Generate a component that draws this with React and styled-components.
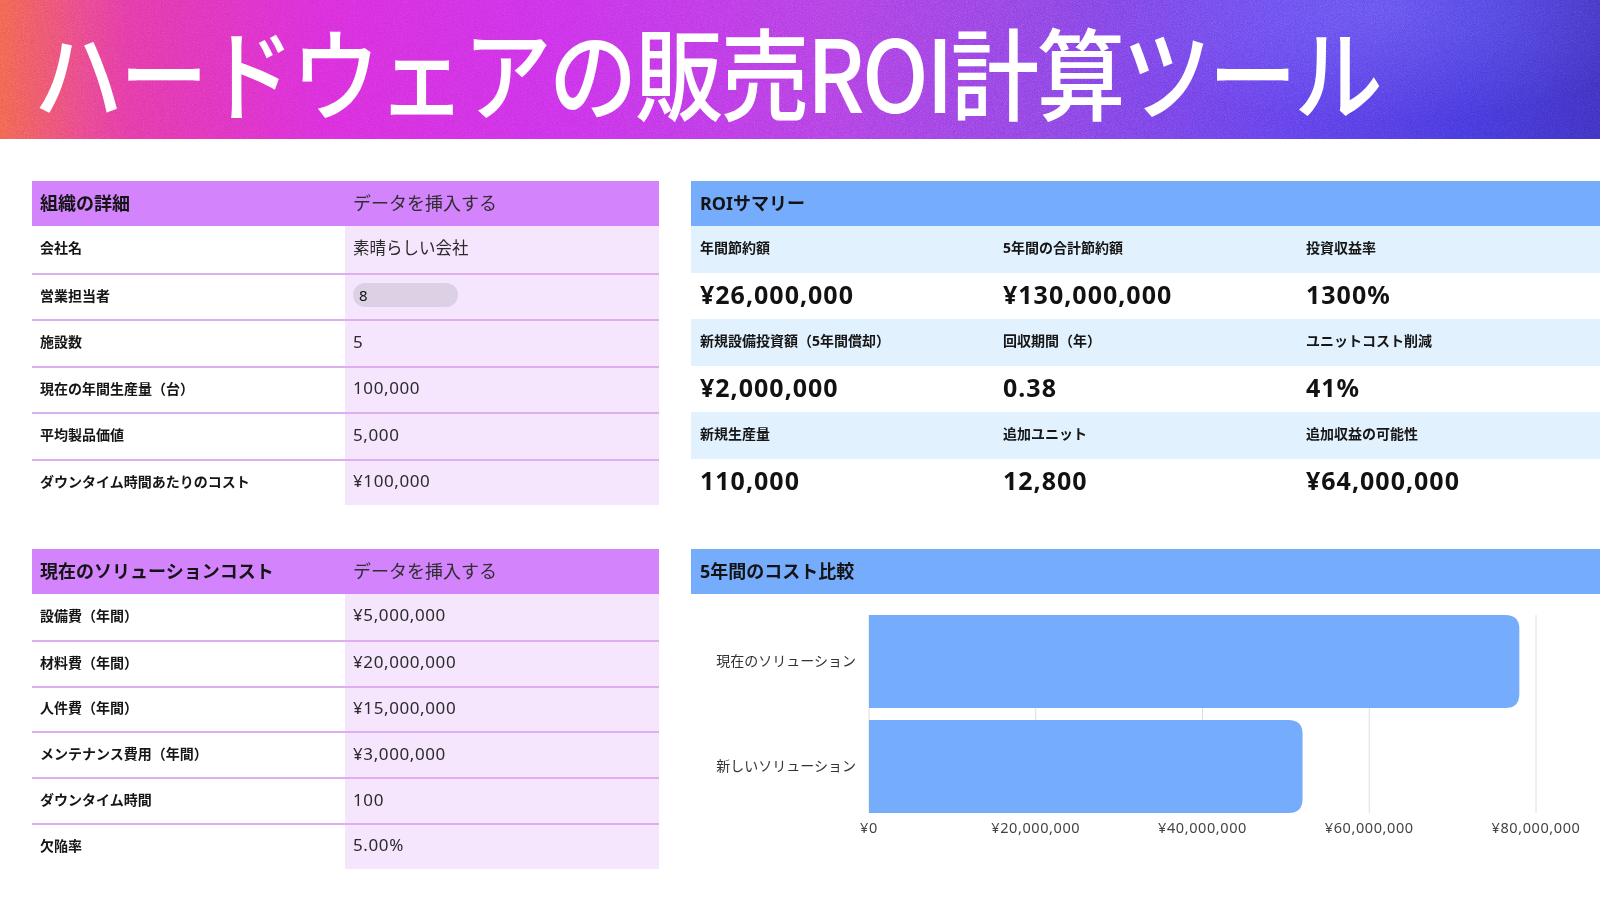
import React from 'react';
import styled, { createGlobalStyle } from 'styled-components';

const GlobalStyle = createGlobalStyle`
    body {
        margin: 0;
        background: #ffffff;
        font-family: "Noto Sans", "Noto Sans CJK JP", sans-serif;
        color: #1d1d1f;
    }
`;

const Page = styled.div`
    width: 1600px;
    height: 900px;
    overflow: hidden;
`;

const Banner = styled.header`
    position: relative;
    height: 139px;
    display: flex;
    align-items: center;
    padding-left: 34px;
    background:
        radial-gradient(ellipse 420px 160px at 1380px 10px, rgba(120, 110, 255, 0.4), transparent 70%),
        linear-gradient(90deg, #ef5b47 0%, #e0359a 8%, #d42ad6 20%, #c42ee6 35%, #a83ce0 52%, #8040e0 65%, #5a3ce8 80%, #4034d8 92%, #3a2eb8 100%);
`;

const Noise = styled.svg`
    position: absolute;
    inset: 0;
    z-index: 0;
    width: 100%;
    height: 100%;
    mix-blend-mode: overlay;
    opacity: 0.8;
    pointer-events: none;
`;

const Title = styled.h1`
    position: relative;
    z-index: 1;
    margin: 0;
    font-family: "Noto Sans CJK JP", sans-serif;
    font-size: 88.5px;
    font-weight: 500;
    line-height: 1.2;
    letter-spacing: -2.65px;
    color: #ffffff;
    white-space: nowrap;
    transform: scaleY(1.13);
    transform-origin: left center;
`;

const Main = styled.main`
    display: grid;
    grid-template-columns: 627px 909px;
    column-gap: 32px;
    row-gap: 44px;
    padding: 42px 0 0 32px;
`;

const Table = styled.section`
    display: grid;
    grid-template-columns: 313px 314px;
`;

const HeadCell = styled.div`
    box-sizing: border-box;
    height: 45px;
    display: flex;
    align-items: center;
    padding: 0 0 4px 8px;
    background: #d383fc;
    font-size: 18px;
    font-weight: ${({ $bold }) => ($bold ? 700 : 400)};
    color: ${({ $bold }) => ($bold ? '#141414' : '#2e2e2e')};
`;

const Cell = styled.div`
    box-sizing: border-box;
    height: ${({ $h }) => $h || '46.5px'};
    display: flex;
    align-items: center;
    padding: 0 0 4px 8px;
    border-top: ${({ $first }) => ($first ? 'none' : '2px solid #dcb0ee')};
`;

const LabelCell = styled(Cell)`
    font-size: 14px;
    font-weight: 700;
    color: #161616;
`;

const ValueCell = styled(Cell)`
    background: #f5e6fe;
    font-size: ${({ $num }) => ($num ? '17px' : '16.5px')};
    letter-spacing: ${({ $num }) => ($num ? '0.6px' : '0')};
    color: #2b2b2b;
`;

const Pill = styled.span`
    display: inline-flex;
    align-items: center;
    box-sizing: border-box;
    width: 105px;
    height: 24px;
    padding-left: 6px;
    border-radius: 12px;
    background: #dcd0e4;
    font-size: 15px;
    color: #111;
`;

const Panel = styled.section`
    display: flex;
    flex-direction: column;
`;

const PanelHead = styled.div`
    box-sizing: border-box;
    height: 45px;
    display: flex;
    align-items: center;
    padding: 0 0 4px 9px;
    background: #76acfc;
    font-size: 18px;
    font-weight: 700;
    color: #141414;
`;

const SummaryGrid = styled.div`
    display: grid;
    grid-template-columns: repeat(3, 303px);
`;

const SumLabel = styled.div`
    box-sizing: border-box;
    height: 46.5px;
    display: flex;
    align-items: center;
    padding: 0 0 4px 9px;
    background: #e1f1fe;
    font-size: 14px;
    font-weight: 700;
    color: #161616;
`;

const SumValue = styled.div`
    box-sizing: border-box;
    height: 46.5px;
    display: flex;
    align-items: center;
    padding: 0 0 4px 9px;
    font-size: 25px;
    font-weight: 700;
    letter-spacing: 1px;
    color: #121212;
`;

const ChartBox = styled.div`
    height: 256px;
`;

const orgRows = [
    ['会社名', '素晴らしい会社'],
    ['営業担当者', '8', true],
    ['施設数', '5'],
    ['現在の年間生産量（台）', '100,000'],
    ['平均製品価値', '5,000'],
    ['ダウンタイム時間あたりのコスト', '¥100,000'],
];

const costRows = [
    ['設備費（年間）', '¥5,000,000'],
    ['材料費（年間）', '¥20,000,000'],
    ['人件費（年間）', '¥15,000,000'],
    ['メンテナンス費用（年間）', '¥3,000,000'],
    ['ダウンタイム時間', '100'],
    ['欠陥率', '5.00%'],
];

const summary = [
    [
        ['年間節約額', '¥26,000,000'],
        ['5年間の合計節約額', '¥130,000,000'],
        ['投資収益率', '1300%'],
    ],
    [
        ['新規設備投資額（5年間償却）', '¥2,000,000'],
        ['回収期間（年）', '0.38'],
        ['ユニットコスト削減', '41%'],
    ],
    [
        ['新規生産量', '110,000'],
        ['追加ユニット', '12,800'],
        ['追加収益の可能性', '¥64,000,000'],
    ],
];

const bars = [
    { label: '現在のソリューション', value: 78000000 },
    { label: '新しいソリューション', value: 52000000 },
];

const isNumeric = (v) => /^[¥0-9.,%]+$/.test(v);

function DataTable({ title, rows, rowHeight }) {
    return (
        <Table>
            <HeadCell $bold>{title}</HeadCell>
            <HeadCell>データを挿入する</HeadCell>
            {rows.map(([label, value, pill], i) => (
                <React.Fragment key={label}>
                    <LabelCell $first={i === 0} $h={rowHeight}>{label}</LabelCell>
                    <ValueCell $first={i === 0} $h={rowHeight} $num={isNumeric(value)}>
                        {pill ? <Pill>{value}</Pill> : value}
                    </ValueCell>
                </React.Fragment>
            ))}
        </Table>
    );
}

function CostChart() {
    const x0 = 178;
    const step = 166.75;
    const max = 80000000;
    const ticks = [0, 20000000, 40000000, 60000000, 80000000];
    const barTop = [21, 126];
    const barH = 93;
    const r = 14;
    const font = '"Noto Sans", "Noto Sans CJK JP", sans-serif';
    return (
        <svg width="909" height="256" viewBox="0 0 909 256">
            {ticks.map((t, i) => (
                <line key={t} x1={x0 + i * step} x2={x0 + i * step} y1="21" y2="219" stroke="#dedede" strokeWidth="1" />
            ))}
            {bars.map((b, i) => {
                const w = (b.value / max) * step * 4;
                const y = barTop[i];
                const x1 = x0 + w;
                return (
                    <g key={b.label}>
                        <path
                            d={`M${x0} ${y} H${x1 - r} Q${x1} ${y} ${x1} ${y + r} V${y + barH - r} Q${x1} ${y + barH} ${x1 - r} ${y + barH} H${x0} Z`}
                            fill="#76acfc"
                        />
                        <text x="165" y={y + barH / 2 + 4} textAnchor="end" fontSize="14" fill="#333" fontFamily={font}>
                            {b.label}
                        </text>
                    </g>
                );
            })}
            {ticks.map((t, i) => (
                <text key={t} x={x0 + i * step} y="239" textAnchor="middle" fontSize="14.5" letterSpacing="0.6" fill="#444" fontFamily={font}>
                    ¥{t.toLocaleString('en-US')}
                </text>
            ))}
        </svg>
    );
}

export default function App() {
    return (
        <Page>
            <GlobalStyle />
            <Banner>
                <Noise>
                    <filter id="grain">
                        <feTurbulence type="fractalNoise" baseFrequency="1.1" numOctaves="2" stitchTiles="stitch" />
                        <feColorMatrix type="saturate" values="0" />
                    </filter>
                    <rect width="100%" height="100%" filter="url(#grain)" />
                </Noise>
                <Title>ハードウェアの販売ROI計算ツール</Title>
            </Banner>
            <Main>
                <DataTable title="組織の詳細" rows={orgRows} />
                <Panel>
                    <PanelHead>ROIサマリー</PanelHead>
                    <SummaryGrid>
                        {summary.map((row, ri) => (
                            <React.Fragment key={ri}>
                                {row.map(([label]) => <SumLabel key={label}>{label}</SumLabel>)}
                                {row.map(([label, value]) => <SumValue key={label + 'v'}>{value}</SumValue>)}
                            </React.Fragment>
                        ))}
                    </SummaryGrid>
                </Panel>
                <DataTable title="現在のソリューションコスト" rows={costRows} rowHeight="45.8px" />
                <Panel>
                    <PanelHead>5年間のコスト比較</PanelHead>
                    <ChartBox>
                        <CostChart />
                    </ChartBox>
                </Panel>
            </Main>
        </Page>
    );
}
